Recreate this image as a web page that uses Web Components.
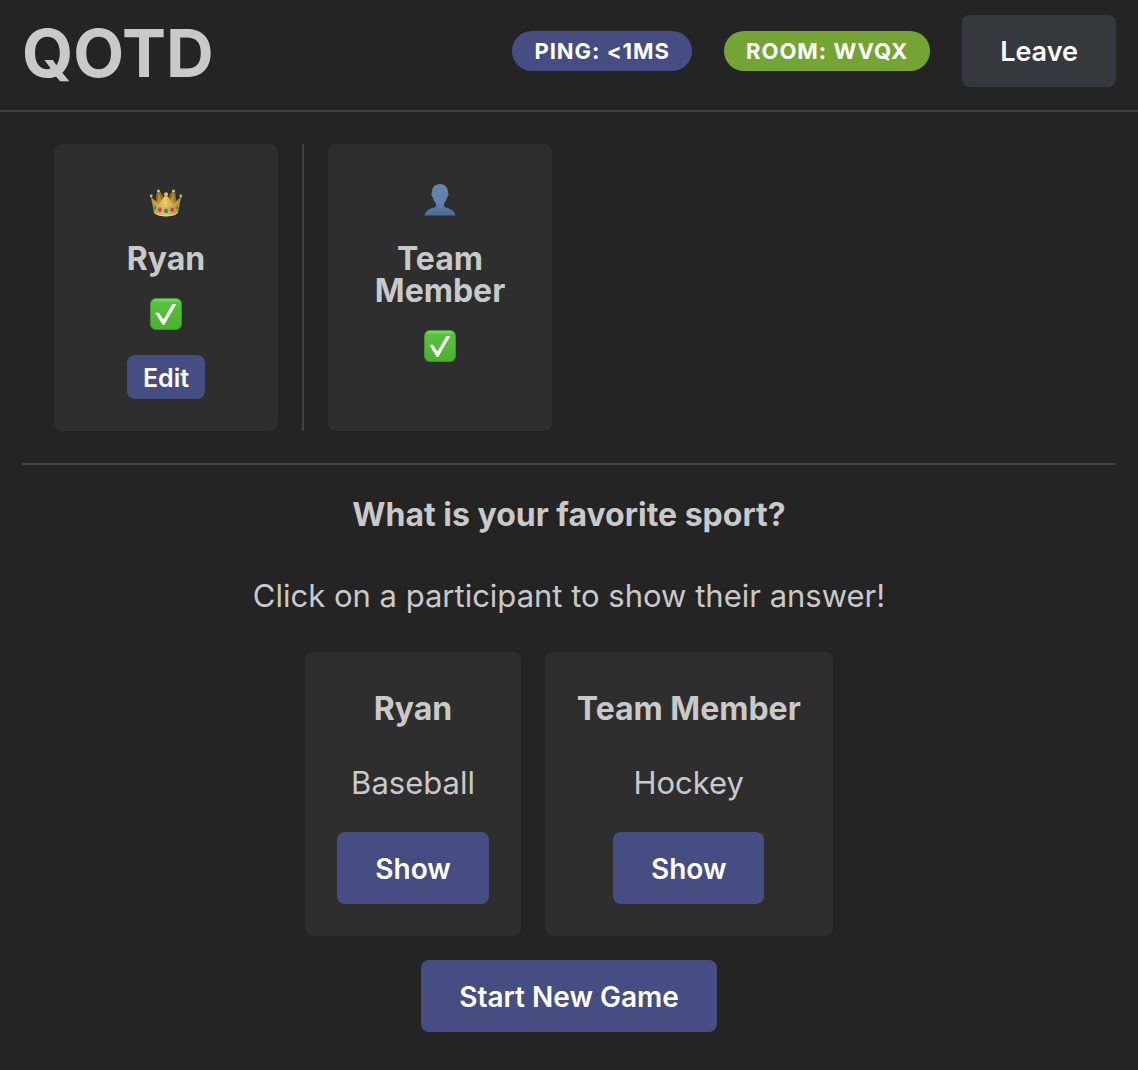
<!DOCTYPE html>
<html lang="en">
<head>
<meta charset="utf-8">
<meta name="viewport" content="width=device-width, initial-scale=1">
<title>QOTD</title>
<style>
  :root {
    --bg: #242424;
    --card: #2e2e2e;
    --line: #424242;
    --text: #c9c9c9;
    --primary: #454d82;
    --green: #74a534;
    --neutral: #35393d;
    --radius: 8px;
  }
  body {
    margin: 0;
    background: var(--bg);
    color: var(--text);
    font: 400 31px/50px Inter, "Liberation Sans", sans-serif;
  }
</style>
</head>
<body>
<qotd-app></qotd-app>

<script>
  class BaseElement extends HTMLElement {
    connectedCallback() {
      if (this.shadowRoot) return;
      this.attachShadow({ mode: "open" }).innerHTML = this.render();
    }
  }

  class UiButton extends BaseElement {
    render() {
      return `
        <style>
          :host { display: block; }
          button {
            display: block;
            height: 72px;
            padding: 2px 38px 0;
            border: 0;
            border-radius: var(--radius);
            background: var(--primary);
            color: #fff;
            font: 600 28px/32px Inter, "Liberation Sans", sans-serif;
            white-space: nowrap;
            cursor: pointer;
          }
          :host([variant="neutral"]) button { background: var(--neutral); font-size: 27px; }
          :host([size="small"]) button { height: 44px; padding: 2px 16px 0; font-size: 25px; }
        </style>
        <button type="button"><slot></slot></button>`;
    }
  }

  class StatusBadge extends BaseElement {
    render() {
      return `
        <style>
          :host {
            display: block;
            padding: 0 22px;
            border-radius: 20px;
            background: var(--primary);
            color: #fff;
            font-size: 22px;
            font-weight: 700;
            letter-spacing: 1px;
            line-height: 40px;
            white-space: nowrap;
          }
          :host([tone="green"]) { background: var(--green); }
        </style>
        <slot></slot>`;
    }
  }

  class EmojiIcon extends BaseElement {
    render() {
      const art = {
        crown: `
          <defs>
            <linearGradient id="gold" x1="0" y1="0" x2="1" y2="0">
              <stop offset="0" stop-color="#b98a2c"/><stop offset=".45" stop-color="#e8c95d"/><stop offset="1" stop-color="#b8892e"/>
            </linearGradient>
          </defs>
          <path d="M5 24 6.500 9 10.500 8 14 14 18 14 21.500 8 25.500 9 27 24Z" fill="#93692a"/>
          <path d="M7 22 8.500 8 11 15 13 21ZM25 22 23.500 8 21 15 19 21Z" fill="#b78f3a"/>
          <path d="M.8 12.500 4 28.500C7.500 33.600 24.500 33.600 28 28.500L31.200 12.500 23.500 20 16 10.500 8.500 20Z" fill="url(#gold)"/>
          <path d="M4.300 28.500C8 33 24 33 27.700 28.500" fill="none" stroke="#f0d77c" stroke-width="1"/>
          <path d="M3.200 21.500C9 25 23 25 28.800 21.500" fill="none" stroke="#c49a38" stroke-width=".8"/>
          <g fill="#dfbd56">
            <circle cx="1.200" cy="12" r="1.400"/><circle cx="30.800" cy="12" r="1.400"/>
            <circle cx="16" cy="10.300" r="2.100"/><circle cx="8.500" cy="7" r="1.600"/><circle cx="23.500" cy="7" r="1.600"/>
          </g>
          <ellipse cx="16" cy="27" rx="2.500" ry="2.300" fill="#2e9c72"/>
          <ellipse cx="9.800" cy="25.800" rx="2" ry="2.200" fill="#c2417c"/>
          <ellipse cx="22.200" cy="25.800" rx="2" ry="2.200" fill="#c2417c"/>
          <ellipse cx="5" cy="23.800" rx="1.400" ry="2" fill="#2e9c72"/>
          <ellipse cx="27" cy="23.800" rx="1.400" ry="2" fill="#2e9c72"/>
          <circle cx="16" cy="19" r="1" fill="#f3e08d"/>`,
        person: `
          <defs>
            <linearGradient id="blue" x1="0" y1="0" x2="0" y2="1">
              <stop offset="0" stop-color="#6685a8"/><stop offset=".6" stop-color="#5f82ae"/><stop offset="1" stop-color="#496b94"/>
            </linearGradient>
          </defs>
          <path d="M16 0C10.800 0 7.900 3.600 8 8.800 7.100 9 7.300 12.500 8.900 13.300 9.400 16 10.600 17.800 12 19.200V22.300C11.500 24.300 1.700 24.200.5 31.500H31.500C30.300 24.200 20.500 24.300 20 22.300V19.200C21.400 17.800 22.600 16 23.100 13.300 24.700 12.500 24.900 9 24 8.800 24.100 3.600 21.200 0 16 0Z" fill="url(#blue)"/>`,
        check: `
          <defs>
            <linearGradient id="green" x1="0" y1="0" x2="0" y2="1">
              <stop offset="0" stop-color="#8bdc70"/><stop offset=".14" stop-color="#58c23f"/><stop offset="1" stop-color="#4bb12f"/>
            </linearGradient>
          </defs>
          <rect x=".5" y=".5" width="31" height="31" rx="5.500" fill="url(#green)" stroke="#3f9e2a" stroke-width=".8"/>
          <path d="M5.200 14.800H9L13.500 21.500 22.400 6H26.300L14.200 27H12.800Z" fill="#fff"/>`
      }[this.getAttribute("name")];
      return `
        <style>
          :host { display: flex; align-items: center; justify-content: center; height: 50px; }
          svg { display: block; width: 32px; height: 32px; overflow: visible; }
        </style>
        <svg viewBox="0 0 32 32" role="img" aria-label="${this.getAttribute("name")}">${art}</svg>`;
    }
  }

  class AppHeader extends BaseElement {
    render() {
      return `
        <style>
          :host { display: block; border-bottom: 2px solid var(--line); }
          header {
            display: flex;
            align-items: center;
            justify-content: space-between;
            padding: 15px 22px 23px;
          }
          h1 { margin: 0; padding-top: 4px; font-size: 66px; font-weight: 700; line-height: 68px; }
          nav { display: flex; align-items: center; gap: 32px; }
        </style>
        <header>
          <h1>QOTD</h1>
          <nav><slot></slot></nav>
        </header>`;
    }
  }

  class ParticipantCard extends BaseElement {
    render() {
      return `
        <style>
          :host {
            display: flex;
            flex-direction: column;
            align-items: center;
            gap: 16px;
            box-sizing: border-box;
            width: 224px;
            padding: 31px 32px 32px;
            border-radius: var(--radius);
            background: var(--card);
            text-align: center;
          }
          h2 { margin: 2px 0 -2px; font-size: 32px; font-weight: 700; line-height: 32px; }
        </style>
        <emoji-icon name="${this.getAttribute("icon")}"></emoji-icon>
        <h2>${this.getAttribute("name")}</h2>
        <emoji-icon name="check"></emoji-icon>
        <slot></slot>`;
    }
  }

  class AnswerCard extends BaseElement {
    render() {
      return `
        <style>
          :host {
            display: flex;
            flex-direction: column;
            align-items: center;
            gap: 24px;
            padding: 32px;
            border-radius: var(--radius);
            background: var(--card);
          }
          h3, p { margin: 0; line-height: 50px; }
          h3 { font-size: 32px; }
        </style>
        <h3>${this.getAttribute("name")}</h3>
        <p><slot></slot></p>
        <ui-button>Show</ui-button>`;
    }
  }

  class QotdApp extends BaseElement {
    render() {
      return `
        <style>
          :host { display: block; }
          main { padding: 0 22px 38px; }
          .participants {
            display: flex;
            gap: 24px;
            padding: 32px;
            border-bottom: 2px solid var(--line);
          }
          .divider { width: 2px; background: var(--line); }
          .round {
            display: flex;
            flex-direction: column;
            align-items: center;
            gap: 31px;
            padding-top: 25px;
            text-align: center;
          }
          h2, p { margin: 0; line-height: 50px; }
          h2 { font-size: 32px; }
          .board { display: flex; flex-direction: column; align-items: center; gap: 24px; }
          .answers { display: flex; flex-wrap: wrap; justify-content: center; gap: 24px; }
        </style>
        <app-header>
          <status-badge>PING: &lt;1MS</status-badge>
          <status-badge tone="green">ROOM: WVQX</status-badge>
          <ui-button variant="neutral">Leave</ui-button>
        </app-header>
        <main>
          <section class="participants">
            <participant-card name="Ryan" icon="crown"><ui-button size="small">Edit</ui-button></participant-card>
            <div class="divider"></div>
            <participant-card name="Team Member" icon="person"></participant-card>
          </section>
          <section class="round">
            <h2>What is your favorite sport?</h2>
            <p>Click on a participant to show their answer!</p>
            <div class="board">
              <div class="answers">
                <answer-card name="Ryan">Baseball</answer-card>
                <answer-card name="Team Member">Hockey</answer-card>
              </div>
              <ui-button>Start New Game</ui-button>
            </div>
          </section>
        </main>`;
    }
  }

  customElements.define("ui-button", UiButton);
  customElements.define("status-badge", StatusBadge);
  customElements.define("emoji-icon", EmojiIcon);
  customElements.define("app-header", AppHeader);
  customElements.define("participant-card", ParticipantCard);
  customElements.define("answer-card", AnswerCard);
  customElements.define("qotd-app", QotdApp);
</script>
</body>
</html>
